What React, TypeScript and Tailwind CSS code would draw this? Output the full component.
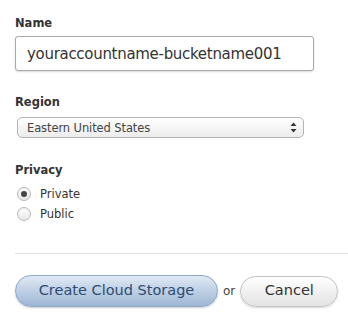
import { useState } from 'react';

const font = 'font-["DejaVu_Sans",sans-serif]';

function Radio({ label, checked, onClick }: { label: string; checked: boolean; onClick: () => void }) {
  return (
    <button type="button" onClick={onClick} className="flex h-5 items-center gap-[9px] text-left">
      <span className="flex h-[14px] w-[14px] items-center justify-center rounded-full border border-[#b9b9b9] bg-gradient-to-b from-white to-[#e8e8e8] shadow-[inset_0_1px_1px_rgba(0,0,0,0.08)]">
        {checked && <span className="h-[6px] w-[6px] rounded-full bg-[#444]" />}
      </span>
      <span className="text-[11.5px] leading-4 text-[#333]">{label}</span>
    </button>
  );
}

export default function App() {
  const [privacy, setPrivacy] = useState<'private' | 'public'>('private');

  return (
    <div className={`${font} h-[321px] w-[348px] overflow-hidden bg-white pl-[15px] pt-[15px]`}>
      <label className="block text-[11.5px] font-bold leading-4 text-[#333]">Name</label>
      <input
        readOnly
        value="youraccountname-bucketname001"
        className="mt-[5px] block h-[35px] w-[299px] rounded-[3px] border border-[#a9a9a9] bg-white px-[11px] text-[15px] tracking-[-0.3px] text-[#333] shadow-[0_1px_2px_rgba(0,0,0,0.15)] outline-none"
      />

      <label className="mt-[23px] block text-[11.5px] font-bold leading-4 text-[#333]">Region</label>
      <div className="ml-[2px] mt-[7px] flex h-[21px] w-[287px] items-center justify-between rounded-[5px] border border-[#b4b4b4] bg-gradient-to-b from-white to-[#ececec] pl-[9px] pr-[6px]">
        <span className="text-[11.5px] leading-4 tracking-[-0.1px] text-[#444]">Eastern United States</span>
        <svg width="7" height="11" viewBox="0 0 7 11" className="text-[#333]">
          <path d="M3.5 0.5 L6.5 4 L0.5 4 Z" fill="currentColor" />
          <path d="M3.5 10.5 L6.5 7 L0.5 7 Z" fill="currentColor" />
        </svg>
      </div>

      <label className="mt-[24px] block text-[11.5px] font-bold leading-4 text-[#333]">Privacy</label>
      <div className="ml-[2px] mt-[6px] flex flex-col">
        <Radio label="Private" checked={privacy === 'private'} onClick={() => setPrivacy('private')} />
        <Radio label="Public" checked={privacy === 'public'} onClick={() => setPrivacy('public')} />
      </div>

      <div className="mt-[29px] h-px bg-[#e2e2e2]" />

      <div className="mt-[21px] flex items-center">
        <button className="h-[32px] w-[203px] rounded-full border border-[#8ea8c8] bg-gradient-to-b from-[#dfe9f4] to-[#9db6d5] text-[14.5px] text-[#2e4c70] shadow-[0_1px_2px_rgba(0,0,0,0.2)]">
          Create Cloud Storage
        </button>
        <span className="mx-[5px] text-[12px] text-[#444]">or</span>
        <button className="h-[31px] w-[98px] rounded-full border border-[#c4c4c4] bg-gradient-to-b from-white to-[#e3e3e3] text-[14.5px] text-[#333] shadow-[0_1px_2px_rgba(0,0,0,0.15)]">
          Cancel
        </button>
      </div>
    </div>
  );
}
